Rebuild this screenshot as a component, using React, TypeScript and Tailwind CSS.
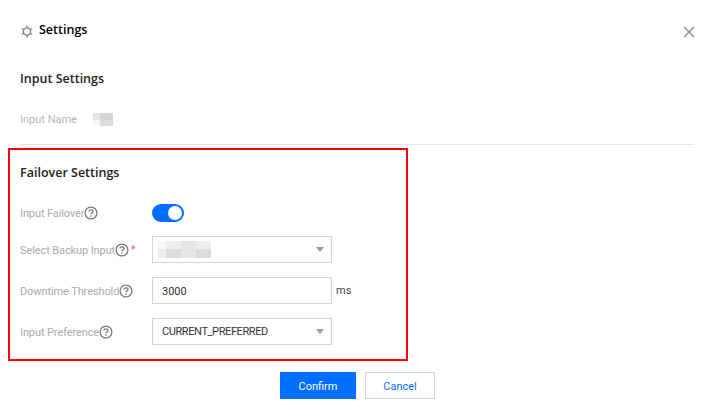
import React from 'react';

const pale = ['#f7f7f7', '#eeeeee', '#e6e6e6', '#dcdcdc', '#d6d6d6'];

function Blur({ cols, className }: { cols: number[]; className: string }) {
  return (
    <div className={`grid ${className}`}>
      {cols.map((c, i) => (
        <div key={i} style={{ backgroundColor: pale[c] }} />
      ))}
    </div>
  );
}

function Help() {
  return (
    <svg width="14" height="14" viewBox="0 0 14 14" fill="none" className="shrink-0">
      <circle cx="7" cy="7" r="5.9" stroke="#7a7a7a" strokeWidth="1.3" />
      <path d="M5 5.6c0-1.1.9-1.8 2-1.8s2 .7 2 1.7c0 1.4-2 1.3-2 2.8" stroke="#7a7a7a" strokeWidth="1.3" />
      <rect x="6.3" y="9.4" width="1.4" height="1.4" fill="#7a7a7a" />
    </svg>
  );
}

function Caret() {
  return (
    <svg width="8" height="5" viewBox="0 0 8 5" className="shrink-0">
      <path d="M0 0h8L4 5z" fill="#999" />
    </svg>
  );
}

function Row({ label, star, children }: { label: string; star?: boolean; children: React.ReactNode }) {
  return (
    <div className="flex items-center">
      <div className="flex w-[132px] items-center whitespace-nowrap text-[11px] text-[#ababab]">
        <span className="pt-[2px] leading-4 tracking-[-0.1px]">{label}</span>
        <Help />
        {star && <span className="ml-[2px] text-[10px] leading-none text-[#e85a5a]">*</span>}
      </div>
      {children}
    </div>
  );
}

export default function App() {
  return (
    <div className="h-[419px] w-[715px] overflow-hidden bg-white font-['Roboto','Open_Sans',sans-serif] text-[#333]">
      <div className="flex h-[60px] items-center justify-between pl-[21px] pr-[20px]">
        <div className="flex items-center gap-[6px]">
          <svg width="12" height="13" viewBox="0 0 12 13" fill="none" className="mt-[2px]">
            <circle cx="6" cy="6.5" r="3.6" stroke="#808080" strokeWidth="1.4" />
            <path d="M6 .4v2.4M6 10.2v2.4M.8 3.5l2.1 1.2M9.1 8.3l2.1 1.2M.8 9.5l2.1-1.2M9.1 4.7l2.1-1.2" stroke="#808080" strokeWidth="1.3" />
          </svg>
          <span className="font-['Open_Sans',sans-serif] text-[12.5px] font-semibold text-black">Settings</span>
        </div>
        <svg width="12" height="12" viewBox="0 0 12 12" className="mt-[3px]">
          <path d="M1 1l10 10M11 1L1 11" stroke="#888" strokeWidth="1.4" />
        </svg>
      </div>

      <div className="mt-[10px] pl-[20px] font-['Open_Sans',sans-serif] text-[12.5px] font-semibold leading-[18px] text-[#222]">Input Settings</div>

      <div className="mt-[23px] flex h-[16px] items-center pl-[20px] text-[11px] text-[#b8b8b8]">
        <span className="w-[73px] pt-[2px] leading-4">Input Name</span>
        <Blur cols={[2, 4, 4, 0, 3, 3]} className="h-[13px] w-[20px] grid-cols-[7px_7px_6px] grid-rows-[7px_6px]" />
      </div>

      <div className="ml-[20px] mr-[21px] mt-[17px] h-px bg-[#e3e6eb]" />

      <div className="ml-[8px] mt-[3px] h-[213px] w-[400px] border-2 border-[#ff0000] pl-[10px] pt-[14px]">
        <div className="font-['Open_Sans',sans-serif] text-[12.5px] font-semibold leading-[18px] text-[#222]">Failover Settings</div>

        <div className="mt-[22px] flex flex-col gap-[14px]">
          <Row label="Input Failover">
            <div className="flex h-[18px] w-[32px] items-center justify-end rounded-full bg-[#006eff] pr-[2px]">
              <div className="h-[14px] w-[14px] rounded-full bg-white" />
            </div>
          </Row>

          <Row label="Select Backup Input" star>
            <div className="flex h-[27px] w-[180px] items-center justify-between border border-[#cfd5de] pl-[5px] pr-[7px]">
              <Blur cols={[0, 1, 2, 1, 1, 3, 2, 3]} className="h-[17px] w-[53px] grid-cols-[8px_15px_15px_15px] grid-rows-[8px_9px]" />
              <Caret />
            </div>
          </Row>

          <Row label="Downtime Threshold">
            <input
              readOnly
              value="3000"
              className="h-[27px] w-[180px] border border-[#cfd5de] px-[9px] pt-[2px] text-[11px] text-[#333] outline-none"
            />
            <span className="ml-[4px] pt-[2px] text-[11px] text-[#444]">ms</span>
          </Row>

          <Row label="Input Preference">
            <div className="flex h-[27px] w-[180px] items-center justify-between border border-[#cfd5de] pl-[9px] pr-[7px] text-[11px] text-[#333]">
              <span className="pt-[2px] tracking-[-0.4px]">CURRENT_PREFERRED</span>
              <Caret />
            </div>
          </Row>
        </div>
      </div>

      <div className="ml-[280px] mt-[11px] flex gap-[9px] text-[11px]">
        <button className="h-[27px] w-[76px] bg-[#006eff] pt-[3px] text-white">Confirm</button>
        <button className="h-[27px] w-[70px] border border-[#cfd5de] bg-white pt-[3px] text-[#006eff]">Cancel</button>
      </div>
    </div>
  );
}
